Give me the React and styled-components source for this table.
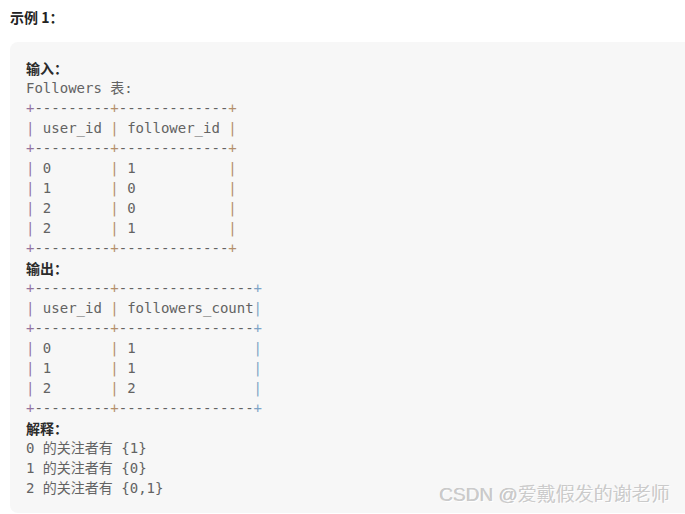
import React from 'react'
import styled, { createGlobalStyle } from 'styled-components'

const Global = createGlobalStyle`
body {
  margin: 0;
  background: #fff;
  overflow: hidden;
}
`

const tones = {
  left: '#94739f',
  mid: '#b48f6c',
  right: '#b48f6c',
  blue: '#7fa4c6',
}

const followers = [
  ['0', '1'],
  ['1', '0'],
  ['2', '0'],
  ['2', '1'],
]

const counts = [
  ['0', '1'],
  ['1', '1'],
  ['2', '2'],
]

const App = () => {
  return (
    <Page>
      <Global />
      <Title>示例 1：</Title>
      <Box>
        <Label>输入：</Label>
        <Line>Followers 表:</Line>
        <Border cols={[9, 13]} end="right" />
        <Row cells={[' user_id ', ' follower_id ']} end="right" />
        <Border cols={[9, 13]} end="right" />
        {followers.map((r, i) => (
          <Row key={i} cells={[' ' + r[0].padEnd(8), ' ' + r[1].padEnd(12)]} end="right" />
        ))}
        <Border cols={[9, 13]} end="right" />
        <Label>输出：</Label>
        <Border cols={[9, 16]} end="blue" />
        <Row cells={[' user_id ', ' followers_count']} end="blue" />
        <Border cols={[9, 16]} end="blue" />
        {counts.map((r, i) => (
          <Row key={i} cells={[' ' + r[0].padEnd(8), ' ' + r[1].padEnd(15)]} end="blue" />
        ))}
        <Border cols={[9, 16]} end="blue" />
        <Label>解释：</Label>
        <Line>0 的关注者有 {'{1}'}</Line>
        <Line>1 的关注者有 {'{0}'}</Line>
        <Line>2 的关注者有 {'{0,1}'}</Line>
        <Watermark>CSDN @爱戴假发的谢老师</Watermark>
      </Box>
    </Page>
  )
}

const Border = ({ cols, end }) => (
  <Line>
    <Mark tone="left">+</Mark>
    {'-'.repeat(cols[0])}
    <Mark tone="mid">+</Mark>
    {'-'.repeat(cols[1])}
    <Mark tone={end}>+</Mark>
  </Line>
)

const Row = ({ cells, end }) => (
  <Line>
    <Mark tone="left">|</Mark>
    {cells[0]}
    <Mark tone="mid">|</Mark>
    {cells[1]}
    <Mark tone={end}>|</Mark>
  </Line>
)

export default App

const Page = styled.div`
padding: 7px 0 0 10px;
font-family: "Noto Sans CJK SC", "Noto Sans", sans-serif;
`

const Title = styled.div`
font-size: 14px;
font-weight: bold;
line-height: 20px;
color: #222;
margin-bottom: 15px;
`

const Box = styled.div`
position: relative;
width: calc(100% + 30px);
box-sizing: border-box;
background: #f7f7f7;
border-radius: 8px;
padding: 16px 16px 15px 16px;
`

const Label = styled.div`
font-size: 14px;
font-weight: bold;
line-height: 20px;
color: #2b2b2b;
`

const Line = styled.pre`
margin: 0;
font-family: "DejaVu Sans Mono", "Noto Sans CJK SC", monospace;
font-size: 14px;
line-height: 20px;
color: #636363;
white-space: pre;
`

const Mark = styled.span`
color: ${p => tones[p.tone]};
`

const Watermark = styled.div`
position: absolute;
right: 45px;
bottom: 7px;
font-family: "Liberation Sans", "Noto Sans CJK SC", sans-serif;
font-size: 19px;
font-weight: 300;
color: #cbcbcb;
text-shadow: 1px 1px 0 #fff, -0.5px -0.5px 0 #c0c0c0;
`
